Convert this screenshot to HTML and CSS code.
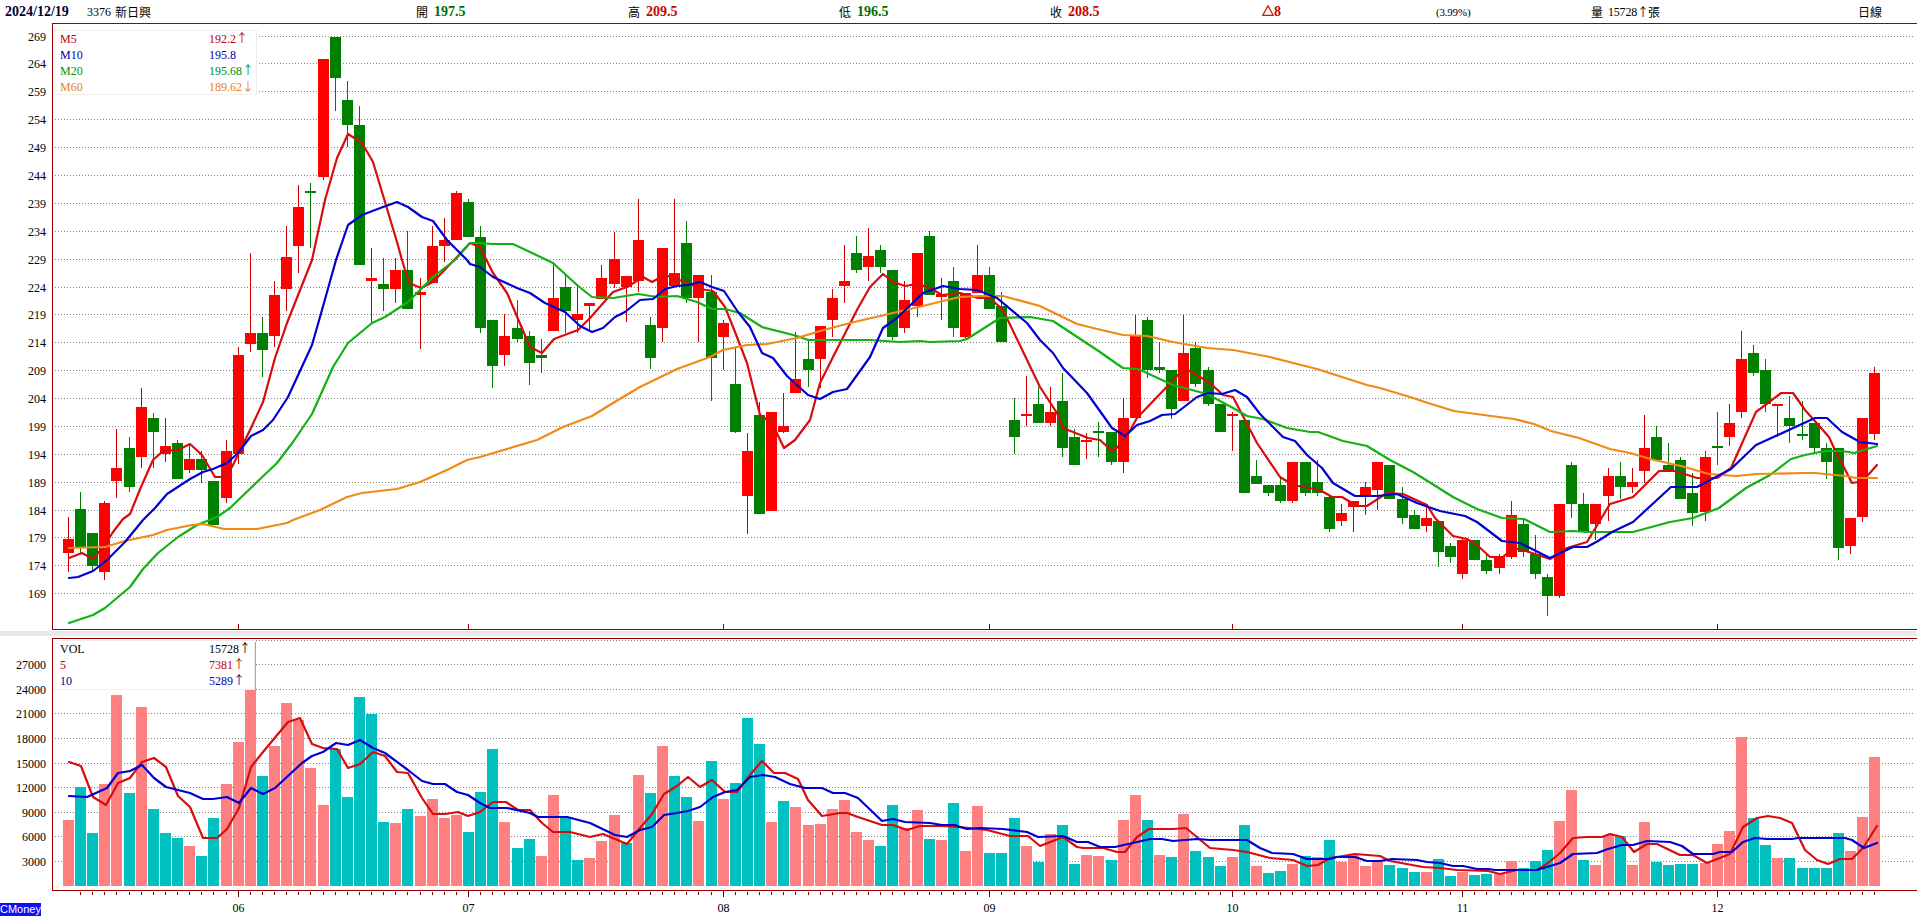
FILE: index.html
```html
<!DOCTYPE html>
<html lang="zh-Hant">
<head>
<meta charset="utf-8">
<title>3376 新日興 日線</title>
<link rel="stylesheet" href="styles.css">
</head>
<body>
<header class="stat-bar">
  <span class="stat date">2024/12/19</span>
  <span class="stat">3376<span class="cjk name">新日興</span></span>
  <span class="stat"><span class="cjk">開</span><b class="up-green">197.5</b></span>
  <span class="stat"><span class="cjk">高</span><b class="up-red">209.5</b></span>
  <span class="stat"><span class="cjk">低</span><b class="up-green">196.5</b></span>
  <span class="stat"><span class="cjk">收</span><b class="up-red">208.5</b></span>
  <span class="stat"><b class="up-red delta"><span class="cjk">△</span>8</b></span>
  <span class="stat percent">(3.99%)</span>
  <span class="stat"><span class="cjk">量</span><span class="vol-num">15728</span><span class="arrow">↑</span><span class="cjk unit">張</span></span>
  <span class="stat"><span class="cjk">日線</span></span>
</header>

<section class="chart-section">
  <svg id="price" class="chart price-chart" viewBox="0 23 1917 608" xmlns="http://www.w3.org/2000/svg"></svg>
  <div class="legend price-legend">
    <div class="legend-row c-red"><span>M5</span><span>192.2<i class="arrow">↑</i></span></div>
    <div class="legend-row c-blue"><span>M10</span><span>195.8</span></div>
    <div class="legend-row c-green"><span>M20</span><span>195.68<i class="arrow">↑</i></span></div>
    <div class="legend-row c-orange"><span>M60</span><span>189.62<i class="arrow">↓</i></span></div>
  </div>
</section>

<div class="divider"></div>

<section class="chart-section">
  <svg id="volume" class="chart volume-chart" viewBox="0 636 1917 287" xmlns="http://www.w3.org/2000/svg"></svg>
  <div class="legend volume-legend">
    <div class="legend-row c-black"><span>VOL</span><span>15728<i class="arrow">↑</i></span></div>
    <div class="legend-row c-red"><span>5</span><span>7381<i class="arrow">↑</i></span></div>
    <div class="legend-row c-blue"><span>10</span><span>5289<i class="arrow">↑</i></span></div>
  </div>
  <div class="brand">CMoney</div>
</section>
<script src="chart.js"></script>
</body>
</html>
```

FILE: styles.css
```css
html, body { margin: 0; padding: 0; background: #fff; }
body {
  width: 1917px;
  height: 923px;
  overflow: hidden;
  font-family: "Liberation Serif", "Noto Sans CJK TC", serif;
  font-size: 12px;
  color: #000;
}
.stat-bar {
  display: grid;
  grid-template-columns: 82px 329px 212px 211px 211px 212px 174px 155px 267px 1fr;
  align-items: center;
  height: 23px;
  padding-left: 5px;
  box-sizing: border-box;
  white-space: nowrap;
}
.stat { display: flex; align-items: center; gap: 0; line-height: 16px; }
.stat b { font-size: 14px; font-weight: 700; margin-left: 6px; }
.stat .delta { margin-left: 0; }
.date { font-size: 14px; font-weight: 700; color: #000033; }
.cjk { font-family: "Noto Sans CJK TC", sans-serif; font-size: 12px; font-weight: 400; }
.cjk.name { margin-left: 4px; }
.cjk.unit { margin-left: -1px; }
.delta .cjk { font-weight: 700; -webkit-text-stroke: 0.5px #c80000; }
.up-green { color: #006e00; }
.up-red { color: #c80000; }
.percent { font-size: 11px; letter-spacing: -0.2px; }
.vol-num { margin-left: 5px; letter-spacing: -0.2px; }
.arrow {
  font-family: "Noto Sans CJK TC", sans-serif;
  font-style: normal;
  font-size: 12px;
  line-height: 12px;
}
.chart-section { position: relative; }
.chart { display: block; width: 1917px; }
.price-chart { height: 608px; }
.volume-chart { height: 287px; }
.divider { height: 5px; background: #e8e8e8; }
.legend {
  position: absolute;
  left: 54px;
  box-sizing: border-box;
  background: #fff;
  border: 1px solid #eeeeee;
  padding: 0 0 0 5px;
}
.price-legend { top: 7px; width: 203px; height: 65px; }
.volume-legend { top: 4px; width: 201px; height: 50px; }
.legend-row {
  display: grid;
  grid-template-columns: 149px 1fr;
  height: 16px;
  line-height: 16px;
  white-space: nowrap;
}
.c-red { color: #c00000; }
.c-blue { color: #0000a8; }
.c-green { color: #009000; }
.c-orange { color: #e88020; }
.c-black { color: #000; }
.brand {
  position: absolute;
  left: 0;
  bottom: 7px;
  width: 41px;
  height: 13px;
  line-height: 13px;
  background: #1010f0;
  color: #fff;
  font-family: "Liberation Sans", sans-serif;
  font-size: 11px;
  overflow: hidden;
  white-space: nowrap;
}
.grid-line { stroke: #808080; stroke-width: 1; stroke-dasharray: 1 2; shape-rendering: crispEdges; }
.frame { stroke: #9a0000; stroke-width: 1; shape-rendering: crispEdges; fill: none; }
.tick { stroke: #5a1010; stroke-width: 1; shape-rendering: crispEdges; }
.axis-label { font-family: "Liberation Serif", serif; font-size: 12px; fill: #000; }
.axis-right { text-anchor: end; }
.axis-middle { text-anchor: middle; }
.wick-r, .body-r, .wick-g, .body-g { shape-rendering: crispEdges; }
.wick-r { fill: #d00000; }
.body-r { fill: #ff0000; }
.wick-g { fill: #007a00; }
.body-g { fill: #008000; }
.bar-p { fill: #ff8080; shape-rendering: crispEdges; }
.bar-t { fill: #00c0c0; shape-rendering: crispEdges; }
.ma { fill: none; stroke-width: 2.2; stroke-linejoin: round; stroke-linecap: round; }
.ma-red { stroke: #d80c0c; }
.ma-blue { stroke: #0000d0; }
.ma-green { stroke: #14b014; }
.ma-orange { stroke: #f08a14; }
```

FILE: chart.js
```js
(function () {
  var NS = 'http://www.w3.org/2000/svg';
  var STEP = 12.123, X0 = 68.5, LEFT = 52, RIGHT = 1917, GRID_END = 1915;
  var MONTHS = [[14, '06'], [33, '07'], [54, '08'], [76, '09'], [96, '10'], [115, '11'], [136, '12']];

  // [red?, wickTop, bodyTop, bodyBottom, wickBottom] in chart pixels
  var C = [
    [1,517,539,553,572],[0,492,509,547,553],[0,533,533,566,570],[1,501,503,572,580],[1,429,468,481,498],
    [0,437,448,487,492],[1,388,407,457,468],[0,413,418,432,468],[1,418,446,454,462],[0,440,443,479,479],
    [1,444,459,470,473],[0,451,459,470,483],[0,481,481,525,525],[1,440,451,498,503],[1,347,355,454,464],
    [1,253,333,344,352],[0,317,333,350,377],[1,281,295,336,347],[1,226,257,289,311],[1,185,207,246,273],
    [0,183,191,193,248],[1,59,59,177,180],[0,37,37,78,111],[0,81,100,125,147],[0,106,125,265,265],
    [1,248,278,281,323],[0,258,284,289,311],[1,258,270,289,303],[0,231,270,309,309],[1,278,292,295,349],
    [1,226,246,283,283],[1,218,240,246,262],[1,191,193,240,240],[0,199,202,237,237],[0,226,237,328,333],
    [0,320,320,366,388],[1,314,336,355,366],[0,300,328,339,342],[0,331,336,363,385],[0,339,355,358,373],
    [1,265,298,331,331],[0,275,287,311,333],[1,284,314,320,333],[1,303,303,306,331],[1,265,278,299,299],
    [1,232,259,284,288],[1,276,276,287,322],[1,199,240,281,292],[0,317,325,358,369],[1,248,248,328,342],
    [1,199,273,286,286],[0,221,243,298,303],[1,275,275,298,342],[0,275,292,358,401],[1,320,323,337,370],
    [0,348,384,432,433],[1,433,451,496,534],[0,402,415,514,514],[1,412,412,511,511],[1,393,426,432,433],
    [1,332,379,393,393],[0,339,359,370,387],[1,326,326,359,388],[1,289,298,320,337],[1,245,281,286,303],
    [0,236,253,270,273],[1,228,256,267,281],[0,245,250,267,273],[0,270,270,337,340],[1,281,300,328,333],
    [1,253,253,306,317],[0,231,236,295,295],[1,278,294,297,320],[0,267,281,328,337],[1,293,293,337,340],
    [1,245,275,293,293],[0,267,275,309,309],[0,292,306,342,342],[0,398,420,437,454],[1,376,414,416,426],
    [0,387,404,423,423],[1,387,412,423,426],[0,373,401,448,457],[0,429,437,465,465],[1,433,440,442,459],
    [0,422,431,433,457],[0,432,432,462,465],[1,398,418,462,473],[1,315,335,418,418],[0,317,320,370,378],
    [0,342,367,370,373],[0,370,370,409,419],[1,315,353,401,401],[0,342,348,384,387],[0,367,370,404,406],
    [0,404,404,432,432],[1,412,414,416,451],[0,420,420,493,493],[0,460,476,484,484],[0,485,485,493,496],
    [0,477,485,501,503],[1,462,462,501,503],[0,462,462,493,496],[0,460,482,493,496],[0,496,497,529,532],
    [1,504,513,521,526],[1,501,501,507,532],[1,482,487,495,515],[1,462,462,490,510],[0,465,465,499,499],
    [0,487,499,518,524],[0,510,515,529,529],[1,507,518,526,532],[0,521,521,552,567],[0,543,546,557,563],
    [1,537,540,574,579],[0,540,540,560,560],[0,555,560,571,574],[1,554,557,568,574],[1,501,515,557,559],
    [0,518,524,552,557],[0,535,554,574,579],[0,574,577,596,616],[1,504,504,596,598],[0,462,465,504,518],
    [0,493,504,532,532],[1,504,504,524,540],[1,468,476,496,521],[0,462,476,487,499],[1,468,482,487,493],
    [1,415,448,471,483],[0,426,437,460,460],[0,443,465,471,471],[0,457,460,499,499],[0,473,493,513,526],
    [1,451,457,512,521],[0,412,446,448,465],[1,404,423,437,446],[1,331,359,412,418],[0,345,353,373,376],
    [0,359,370,404,412],[1,404,404,406,437],[0,396,418,426,443],[0,401,434,436,440],[0,423,423,448,453],
    [0,443,448,462,479],[0,448,448,548,560],[1,518,518,546,554],[1,418,418,517,522],[1,367,373,434,440]
  ];

  // Top of each volume bar: positive = pink, negative = teal
  var V = [
    820,-787,-833,784,695,-793,707,-809,-833,-838,846,-856,-818,784,742,642,-776,746,703,720,
    768,805,-749,-797,-697,-714,-822,823,-809,816,799,818,815,-832,-792,-749,822,-848,-839,856,
    795,-817,-860,858,841,815,-843,775,-793,746,-776,-797,821,-761,799,-783,-718,-744,822,-801,
    807,825,824,809,800,832,840,-846,-805,828,810,-839,840,-803,851,806,-853,-853,-818,846,
    -862,834,-825,-864,855,856,-860,820,795,-820,855,-857,814,-851,-857,-866,857,-825,866,-873,
    -871,864,-856,857,-840,862,855,866,860,-865,-868,-872,872,-859,-876,872,-875,-874,874,861,
    -868,-861,-850,821,790,-860,865,835,-836,865,822,-862,-865,-864,-864,863,844,831,737,-818,
    -845,858,-858,-868,-868,-868,-833,851,817,757
  ];

  var M60 = [69,548,105,547,125,541,153,535,167,530,192,525,203,524,224,529,257,529,287,523,293,520,320,510,347,497,362,493,397,489,420,482,447,470,467,460,480,457,537,440,563,427,592,416,613,403,640,387,677,369,710,357,723,350,747,345,767,344,797,338,820,331,850,323,893,313,923,306,947,300,960,297,980,296,1003,296,1040,306,1077,324,1093,328,1123,335,1147,336,1173,342,1207,348,1233,350,1270,357,1317,369,1367,385,1380,388,1410,397,1428,403,1454,411,1476,414,1514,419,1534,424,1551,431,1579,438,1610,449,1630,453,1654,460,1681,466,1709,474,1736,476,1757,474,1805,473,1815,473,1825,474,1846,476,1856,478,1877,478];

  var M20 = [69,623,93,615,105,608,130,587,143,569,158,553,178,537,197,525,217,517,230,508,257,482,277,463,293,442,312,414,333,367,348,343,372,323,385,317,408,302,433,277,455,260,470,243,480,243,492,244,513,244,530,252,553,263,577,285,592,297,613,298,638,294,657,297,677,296,697,302,712,309,725,309,740,313,762,327,797,336,808,340,870,340,900,342,920,341,930,342,960,341,967,339,1000,318,1030,317,1053,321,1100,352,1117,364,1123,368,1138,369,1173,385,1207,394,1233,408,1247,416,1263,419,1287,428,1310,432,1318,432,1343,441,1367,446,1390,460,1413,472,1426,480,1453,497,1477,509,1502,518,1524,519,1550,532,1573,531,1587,532,1633,532,1670,522,1693,518,1719,508,1746,488,1770,475,1791,459,1805,455,1825,451,1842,451,1854,453,1877,446];

  var M10 = [69,578,78,577,93,571,107,560,125,542,143,520,155,508,167,494,190,479,203,472,213,469,227,463,238,453,251,436,263,430,273,420,288,397,312,345,322,310,336,260,348,225,362,215,383,207,397,202,408,207,422,217,433,221,447,240,467,260,470,264,480,267,493,277,517,288,530,293,545,303,565,312,580,326,592,332,603,328,615,317,625,312,640,300,653,299,665,289,677,286,688,285,700,282,712,287,724,291,738,312,750,327,762,353,773,358,787,376,808,395,820,399,833,392,847,389,870,357,883,328,897,318,923,293,943,286,960,289,977,290,997,298,1027,323,1040,340,1053,353,1063,368,1087,393,1112,428,1125,436,1137,425,1150,421,1162,415,1175,414,1197,397,1208,393,1222,394,1235,390,1247,397,1260,414,1283,437,1295,441,1307,455,1322,468,1333,483,1355,496,1377,496,1397,494,1417,503,1440,511,1465,516,1477,522,1502,541,1520,543,1550,558,1573,547,1587,547,1598,541,1612,532,1633,522,1671,487,1697,487,1731,469,1756,445,1815,418,1827,418,1842,432,1860,442,1877,444];

  var M5 = [69,558,82,553,93,559,105,545,113,532,123,519,130,514,141,487,153,460,163,451,178,450,190,444,202,455,215,477,222,477,232,467,251,428,263,402,275,358,287,323,312,260,325,200,337,158,348,134,362,143,373,162,397,242,402,260,409,283,421,288,433,282,457,257,470,243,480,247,493,273,507,293,530,347,542,353,554,339,578,330,590,318,613,292,627,287,643,277,652,282,665,275,688,283,700,289,713,291,725,307,737,337,747,363,760,415,772,423,784,448,795,440,810,420,820,383,833,357,858,308,870,287,883,274,893,282,905,286,917,284,930,288,942,295,960,293,978,298,990,298,1003,310,1040,387,1057,413,1063,428,1088,438,1100,440,1112,451,1123,443,1137,418,1180,373,1190,371,1210,383,1223,395,1233,397,1245,420,1257,443,1280,477,1293,485,1320,490,1332,497,1342,497,1357,506,1367,506,1387,493,1403,494,1427,505,1435,518,1453,536,1467,539,1477,545,1490,557,1503,557,1513,548,1523,550,1550,559,1567,548,1587,542,1610,504,1633,497,1659,471,1675,471,1697,478,1717,478,1731,468,1756,412,1781,393,1793,393,1805,410,1829,437,1834,448,1852,483,1858,482,1868,475,1877,465];

  var V5 = [69,762,81,766,93,797,106,805,118,783,130,778,142,762,154,758,166,767,178,796,190,807,203,838,217,838,227,829,239,808,251,767,263,752,288,722,300,718,312,744,323,748,337,749,348,768,360,764,373,752,385,756,397,772,408,773,422,798,433,814,445,814,458,812,468,816,480,812,493,802,506,802,518,810,530,810,542,823,553,832,570,832,590,837,603,834,627,844,640,828,652,814,664,794,677,786,688,777,700,787,712,780,725,792,737,792,750,775,762,761,774,773,785,773,798,779,808,800,822,816,840,813,847,813,858,817,882,825,893,825,907,830,920,826,942,826,960,827,987,830,1010,836,1028,836,1040,846,1063,837,1077,847,1083,848,1103,848,1117,852,1125,852,1137,837,1149,829,1173,829,1186,828,1210,848,1233,850,1247,852,1270,858,1293,860,1307,866,1318,865,1330,858,1343,856,1355,854,1380,856,1390,861,1423,867,1440,868,1457,870,1488,871,1500,874,1517,870,1537,870,1548,863,1560,853,1573,838,1587,837,1602,837,1610,834,1622,837,1634,852,1647,844,1657,844,1680,855,1693,855,1707,863,1730,854,1743,827,1757,818,1768,816,1780,818,1792,823,1805,850,1817,860,1828,864,1840,859,1852,859,1863,848,1877,826];

  var V10 = [69,796,87,797,107,788,118,773,130,771,142,765,154,778,166,787,190,793,203,799,213,799,227,797,239,803,251,788,263,794,275,788,302,763,312,756,323,752,336,743,348,745,360,740,373,748,385,753,408,770,422,781,433,784,445,784,457,792,468,795,480,803,490,808,507,808,530,813,538,817,567,817,590,823,615,835,627,837,640,830,652,827,664,815,677,813,688,811,700,807,713,797,725,792,737,790,750,777,763,775,775,777,790,784,805,788,822,788,833,793,845,793,858,798,882,821,893,819,905,822,930,823,942,825,955,825,960,827,967,829,980,828,1003,829,1027,832,1038,837,1063,836,1077,842,1088,842,1100,847,1115,847,1137,842,1150,839,1162,839,1173,841,1197,839,1210,840,1247,840,1260,848,1272,853,1293,854,1307,859,1330,859,1337,857,1355,857,1367,861,1380,861,1392,859,1417,860,1427,862,1440,863,1453,866,1463,866,1477,869,1488,869,1495,870,1537,870,1560,863,1573,854,1597,853,1608,849,1622,845,1633,845,1647,841,1670,842,1682,846,1693,854,1713,854,1720,852,1732,852,1743,842,1755,838,1767,839,1792,839,1798,838,1845,838,1852,840,1864,848,1877,843];

  function el(parent, name, attrs, text) {
    var n = document.createElementNS(NS, name);
    for (var k in attrs) n.setAttribute(k, attrs[k]);
    if (text !== undefined) n.textContent = text;
    parent.appendChild(n);
    return n;
  }
  function cx(i) { return Math.floor(X0 + i * STEP); }
  function poly(svg, pts, cls) {
    var s = [];
    for (var i = 0; i < pts.length; i += 2) s.push(pts[i] + ',' + pts[i + 1]);
    el(svg, 'polyline', { 'class': 'ma ' + cls, points: s.join(' ') });
  }
  function hline(svg, y, x1, x2, cls) { el(svg, 'line', { 'class': cls, x1: x1, x2: x2, y1: y, y2: y }); }
  function vline(svg, x, y1, y2, cls) { el(svg, 'line', { 'class': cls, x1: x, x2: x, y1: y1, y2: y2 }); }

  // ---------- price panel ----------
  var p = document.getElementById('price');
  for (var k = 0; k <= 20; k++) {
    var gy = Math.round(35.6 + k * 27.88) + 0.5;
    hline(p, gy, LEFT, GRID_END, 'grid-line');
    el(p, 'text', { 'class': 'axis-label axis-right', x: 46, y: gy + 4 }, String(269 - k * 5));
  }
  hline(p, 23.5, LEFT, RIGHT, 'frame');
  hline(p, 629.5, LEFT, RIGHT, 'frame');
  vline(p, 52.5, 23, 630, 'frame');
  MONTHS.forEach(function (m) { vline(p, cx(m[0]) + 0.5, 624, 630, 'frame'); });
  C.forEach(function (c, i) {
    var x = cx(i), t = c[0] ? 'r' : 'g';
    el(p, 'rect', { 'class': 'wick-' + t, x: x, y: c[1], width: 1, height: c[4] - c[1] });
    el(p, 'rect', { 'class': 'body-' + t, x: x - 5, y: c[2], width: 11, height: Math.max(c[3] - c[2], 2) });
  });
  poly(p, M5, 'ma-red');
  poly(p, M20, 'ma-green');
  poly(p, M60, 'ma-orange');
  poly(p, M10, 'ma-blue');

  // ---------- volume panel ----------
  var v = document.getElementById('volume');
  for (var j = 1; j <= 10; j++) {
    var vy = Math.round(885.6 - j * 24.6) + 0.5;
    hline(v, vy, LEFT, GRID_END, 'grid-line');
    if (j < 10) el(v, 'text', { 'class': 'axis-label axis-right', x: 46, y: vy + 4 }, String(j * 3000));
  }
  hline(v, 638.5, LEFT, RIGHT, 'frame');
  hline(v, 890.5, LEFT, RIGHT, 'frame');
  vline(v, 52.5, 638, 891, 'frame');
  V.forEach(function (t, i) {
    var top = Math.abs(t);
    el(v, 'rect', { 'class': t > 0 ? 'bar-p' : 'bar-t', x: cx(i) - 5, y: top, width: 11, height: 886 - top });
  });
  for (var i = 1; i < C.length; i++) vline(v, cx(i) + 0.5, 892, 895, 'tick');
  MONTHS.forEach(function (m) {
    vline(v, cx(m[0]) + 0.5, 891, 897, 'tick');
    el(v, 'text', { 'class': 'axis-label axis-middle', x: cx(m[0]) + 0.5, y: 912 }, m[1]);
  });
  poly(v, V5, 'ma-red');
  poly(v, V10, 'ma-blue');
})();
```
